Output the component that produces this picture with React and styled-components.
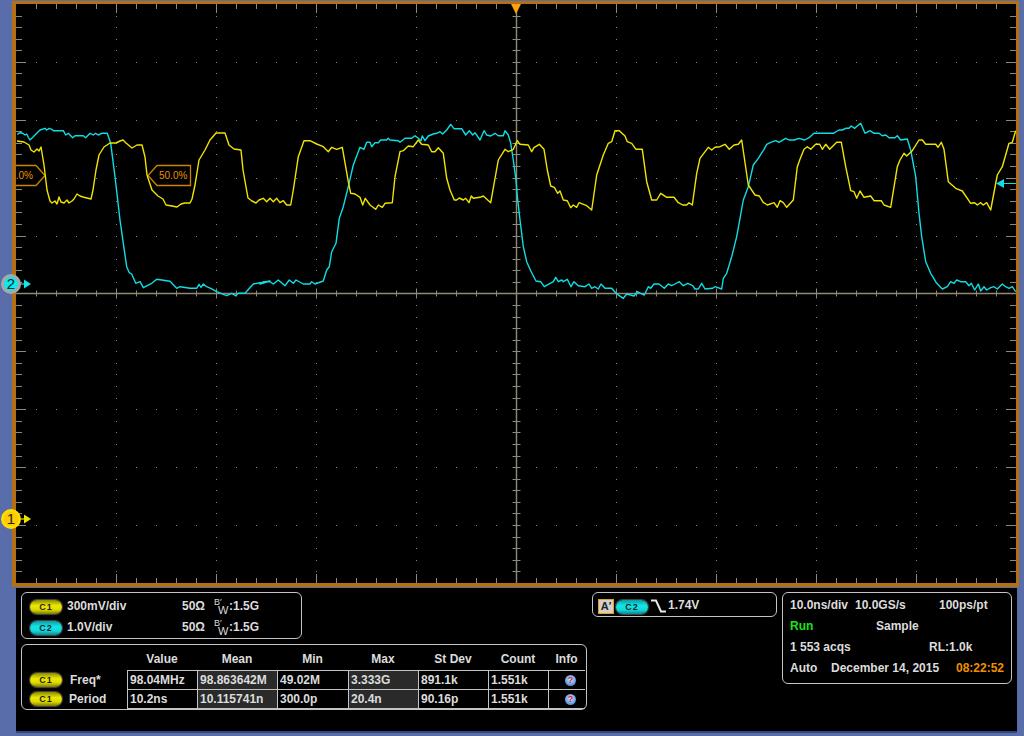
import React from "react";
import styled, { createGlobalStyle } from "styled-components";

const Global = createGlobalStyle`
  html, body {
    margin: 0;
    padding: 0;
    background: #5a6dab;
  }
  body {
    width: 1024px;
    height: 736px;
    overflow: hidden;
    font-family: "Liberation Sans", Arial, sans-serif;
  }
`;

// traces were read off the zoomed crops, so points are [crop x, crop y] at 3x
const crop = (ox, oy, pts) => pts.map(([x, y]) => [ox + x / 3, oy + y / 3]);
const toLine = pts => pts.map(([x, y]) => `${x.toFixed(1)},${y.toFixed(1)}`).join(" ");

const yellow = toLine([
  ...crop(0, 0, [[51, 423], [72, 426], [87, 435], [93, 450], [102, 456], [111, 447], [117, 453], [123, 441], [132, 495], [141, 570], [150, 603], [156, 609], [165, 603], [171, 612], [177, 591], [183, 606], [192, 609], [201, 600], [207, 609], [216, 603], [222, 597], [231, 582], [240, 588], [249, 591], [261, 594], [273, 597], [279, 570], [288, 510], [297, 465], [312, 441], [330, 429], [348, 429], [360, 423], [369, 420], [378, 429], [396, 444], [411, 435], [426, 435], [435, 471], [441, 525], [456, 570], [474, 588], [489, 597], [498, 615], [516, 618], [531, 621], [543, 612], [555, 609], [570, 609], [576, 597], [585, 555], [597, 480], [615, 450], [630, 420], [648, 399], [675, 399], [687, 435], [702, 447], [723, 450], [729, 510], [744, 594], [756, 603], [768, 609], [777, 600]]),
  ...crop(260, 110, [[10, 265], [20, 275], [30, 265], [40, 275], [50, 265], [60, 278], [70, 272], [80, 285], [92, 285], [100, 240], [115, 140], [132, 92], [150, 92], [170, 102], [190, 110], [205, 125], [215, 112], [230, 118], [247, 112], [265, 215], [272, 250], [285, 252], [300, 262], [308, 285], [316, 265], [330, 285], [347, 298], [355, 285], [367, 292], [375, 280], [397, 278], [405, 200], [420, 125], [430, 122], [445, 108], [460, 110], [475, 90], [485, 103], [505, 105], [515, 125], [525, 125], [535, 113], [550, 130], [560, 205], [570, 240], [583, 270], [590, 270], [598, 264], [610, 270], [617, 265], [627, 278], [634, 258], [640, 265], [660, 262], [670, 258], [692, 278], [715, 150], [735, 118], [745, 125], [760, 118]]),
  ...crop(510, 110, [[22, 92], [30, 103], [55, 105], [65, 125], [72, 113], [88, 103], [102, 118], [112, 180], [122, 228], [133, 232], [143, 250], [150, 243], [160, 270], [172, 272], [182, 293], [190, 285], [200, 292], [207, 278], [230, 287], [245, 300], [260, 195], [280, 135], [295, 100], [305, 95], [315, 62], [328, 62], [345, 78], [352, 95], [365, 100], [378, 118], [397, 118], [410, 215], [425, 270], [440, 270], [452, 250], [470, 262], [492, 262], [505, 278], [518, 285], [530, 285], [537, 278], [547, 285], [560, 190], [570, 145], [595, 112], [605, 120], [615, 112], [630, 110], [645, 103], [658, 118], [672, 105], [685, 103], [695, 90], [715, 225], [735, 255], [748, 258], [760, 278]]),
  ...crop(764, 110, [[0, 278], [10, 285], [30, 278], [40, 292], [48, 272], [58, 278], [68, 292], [88, 270], [100, 170], [107, 150], [120, 118], [130, 110], [140, 118], [155, 103], [167, 103], [175, 118], [185, 103], [197, 118], [218, 97], [232, 97], [245, 170], [260, 242], [270, 245], [278, 265], [288, 243], [300, 262], [320, 258], [330, 272], [352, 272], [360, 285], [380, 292], [400, 170], [408, 150], [420, 130], [428, 138], [445, 122], [465, 90], [475, 90], [485, 103], [515, 103], [522, 112], [532, 97], [540, 118], [553, 215], [575, 235], [595, 243], [620, 280], [632, 278], [640, 285], [650, 278], [658, 285], [668, 278], [680, 300], [700, 195], [715, 170], [735, 100], [745, 97], [755, 62]]),
]);

const cyan = toLine([
  ...crop(0, 0, [[52, 403], [60, 398], [68, 400], [75, 405], [80, 402], [85, 412], [90, 420], [100, 410], [110, 400], [120, 390], [135, 385], [140, 390], [148, 385], [155, 388], [160, 392], [190, 392], [197, 405], [205, 400], [218, 413], [225, 407], [250, 407], [257, 413], [270, 400], [280, 405], [287, 400], [295, 405], [305, 400], [322, 400]]),
  ...crop(90, 120, [[62, 70], [75, 170], [90, 300], [100, 370], [110, 440], [118, 458], [125, 462], [137, 490], [150, 485], [160, 503], [185, 490], [200, 478], [240, 484], [260, 505], [270, 500], [300, 505], [320, 505], [327, 493], [333, 502], [340, 492], [350, 500], [362, 505], [380, 515], [410, 527], [425, 520], [437, 527], [445, 520], [465, 520], [490, 492], [510, 488], [540, 483]]),
  ...crop(260, 110, [[0, 522], [10, 515], [30, 515], [40, 522], [55, 510], [75, 527], [88, 510], [100, 520], [108, 510], [130, 522], [150, 522], [155, 515], [165, 522], [190, 513], [200, 480], [208, 470], [215, 425], [228, 400], [238, 325], [250, 290], [265, 230], [280, 165], [300, 112], [312, 118], [320, 97], [330, 97], [335, 110], [345, 98], [355, 98], [362, 90], [380, 90], [385, 85], [390, 90], [415, 92], [420, 97], [435, 85], [455, 85], [465, 77], [475, 85], [483, 92], [487, 78], [495, 92], [505, 78], [520, 72], [530, 70], [540, 65], [548, 72], [560, 60], [572, 43], [582, 56], [605, 56], [617, 75], [628, 62], [638, 75], [645, 68], [660, 90], [672, 62], [680, 75], [692, 78], [705, 70], [715, 77], [730, 77], [735, 62], [745, 75], [752, 100], [760, 150], [768, 210]]),
  ...crop(510, 110, [[22, 260], [30, 330], [40, 410], [50, 455], [62, 482], [78, 513], [92, 515], [103, 530], [115, 523], [130, 515], [137, 502], [145, 515], [155, 510], [160, 515], [172, 508], [183, 530], [192, 515], [205, 527], [225, 530], [237, 522], [245, 535], [255, 530], [265, 537], [273, 522], [285, 535], [305, 535], [318, 550], [340, 565], [350, 552], [362, 555], [372, 558], [382, 545], [392, 550], [403, 555], [415, 530], [422, 535], [432, 522], [447, 522], [463, 535], [475, 522], [485, 527], [495, 522], [508, 515], [520, 527], [533, 520], [548, 527], [555, 537], [565, 537], [575, 520], [585, 537], [608, 535], [615, 530], [635, 537], [640, 505], [650, 490], [665, 440], [680, 380], [700, 270], [715, 230], [730, 165], [745, 145]]),
  ...crop(764, 110, [[0, 118], [8, 103], [20, 97], [35, 92], [45, 97], [65, 85], [75, 90], [90, 90], [105, 85], [122, 90], [135, 83], [150, 70], [208, 70], [225, 60], [235, 60], [245, 55], [255, 55], [262, 48], [272, 55], [280, 48], [290, 40], [303, 70], [318, 62], [330, 70], [345, 70], [355, 77], [365, 75], [375, 83], [393, 83], [400, 77], [410, 90], [430, 87], [440, 120], [455, 200], [465, 310], [473, 380], [485, 455], [500, 490], [518, 520], [535, 537], [550, 530], [560, 515], [570, 520], [578, 510], [590, 515], [605, 515], [615, 527], [622, 520], [632, 540], [643, 522], [650, 543], [660, 530], [668, 540], [680, 533], [690, 530], [700, 537], [715, 522], [725, 530], [735, 535], [745, 530], [755, 545]]),
]);

// graticule
const LEFT = 16;
const RIGHT = 1016;
const TOP = 4;
const BOTTOM = 583;
const CX = 516.5;
const CY = 293.5;
const STEP_Y = 11.58;
const xs = Array.from({ length: 49 }, (_, i) => 36.5 + i * 20);
const ys = Array.from({ length: 49 }, (_, i) => Math.round(15.5 + i * STEP_Y) + 0.5);
const colXs = [116.5, 216.5, 316.5, 416.5, 616.5, 716.5, 816.5, 916.5];
const rowYs = ys.filter((_, i) => (i + 1) % 5 === 0 && Math.abs(ys[i] - CY) > 3);

const isMajorX = x => Math.round(x - 16.5) % 100 === 0;
const isMajorY = i => (i + 1) % 5 === 0;

const ticks = [
  ...xs.map(x => {
    const h = isMajorX(x) ? 9 : 5;
    return `M${x} ${TOP}v${h}M${x} ${BOTTOM}v${-h}M${x} ${CY - (isMajorX(x) ? 5 : 3)}v${isMajorX(x) ? 10 : 6}`;
  }),
  ...ys.map((y, i) => {
    const w = isMajorY(i) ? 10 : 6;
    return `M${LEFT} ${y}h${w}M${RIGHT} ${y}h${-w}M${CX - 4} ${y}h8`;
  }),
].join("");

const dots = [
  ...rowYs.flatMap(y => xs.map(x => `M${x - 0.5} ${y}h1`)),
  ...colXs.flatMap(x => ys.map(y => `M${x - 0.5} ${y}h1`)),
].join("");

const Page = styled.div`
  width: 1024px;
  height: 736px;
  background: #5a6dab;
  padding-top: 1px;
  box-sizing: border-box;
`;

const Frame = styled.div`
  width: 1000px;
  height: 579px;
  margin-left: 12px;
  border: solid #b46f12;
  border-width: 3px 3px 4px 4px;
  background: #000;
  position: relative;
`;

const Screen = styled.svg`
  display: block;
  width: 1000px;
  height: 579px;
`;

const RefText = styled.text`
  font-family: "Liberation Sans", Arial, sans-serif;
  font-size: 10px;
  fill: #e89200;
`;

const TriggerPos = styled.div`
  position: absolute;
  left: 495px;
  top: 0;
  width: 0;
  height: 0;
  border-left: 5px solid transparent;
  border-right: 5px solid transparent;
  border-top: 10px solid #ffa010;
`;

const Handle = styled.div`
  position: absolute;
  left: -15px;
  top: ${p => p.$top}px;
  display: flex;
  align-items: center;
`;

const HandleDot = styled.div`
  width: 20px;
  height: 20px;
  border-radius: 50%;
  box-sizing: border-box;
  border: 3px solid ${p => p.$ring};
  background: radial-gradient(circle, ${p => p.$color} 60%, ${p => p.$edge});
  color: #222;
  font-size: 15px;
  line-height: 14px;
  text-align: center;
`;

const Panel = styled.div`
  width: 1001px;
  height: 145px;
  margin: 1px 0 0 16px;
  box-sizing: border-box;
  background: #000;
  border-bottom: 2px solid #34447e;
  padding: 4px 0 0 5px;
  display: flex;
  gap: 5px;
  align-items: flex-start;
  color: #dcdcdc;
  font-size: 12px;
  font-weight: bold;
  line-height: 14px;
  white-space: nowrap;
`;

const Column = styled.div`
  display: flex;
  flex-direction: column;
  gap: 5px;
`;

const Box = styled.div`
  box-sizing: border-box;
  width: ${p => p.$w}px;
  height: ${p => p.$h}px;
  border: 1px solid #c4c4c4;
  border-radius: 6px;
`;

const ChannelBox = styled(Box)`
  padding: 5px 0 0 8px;
  display: flex;
  flex-direction: column;
  gap: 7px;
`;

const ChannelRow = styled.div`
  display: grid;
  grid-template-columns: 32px 110px 27px auto;
  column-gap: 5px;
  align-items: center;
  height: 14px;
`;

const Pill = styled.span`
  display: block;
  width: 32px;
  height: 14px;
  border-radius: 7px;
  box-shadow: 0 0 1px 1px #4a4a4a;
  background: ${p =>
    p.$ch === 2
      ? "linear-gradient(#0b9ca1, #12e4e8 40%, #12d8dc 70%, #088a8e)"
      : "linear-gradient(#8c8a00, #ece800 40%, #dcd800 70%, #7c7a00)"};
  color: #1c1c1c;
  font-size: 9px;
  font-weight: bold;
  line-height: 14px;
  letter-spacing: 1px;
  text-align: center;
`;

const DropPill = styled(Pill)`
  margin-top: 2px;
`;

const BwCell = styled.span`
  display: flex;
`;

const Bw = styled.span`
  display: flex;
  flex-direction: column;
  width: 15px;
  height: 14px;
  font-weight: normal;
`;

const BwTop = styled.span`
  font-size: 9px;
  line-height: 7px;
`;

const BwLow = styled.span`
  font-size: 11px;
  line-height: 9px;
  padding-left: 4px;
`;

const Meas = styled(Box)`
  display: grid;
  grid-template-columns: 105px 70px 80px 71px 70px 70px 60px 37px;
  grid-template-rows: 25px 19px 20px;
`;

const Head = styled.div`
  text-align: center;
  align-self: center;
  padding-top: 3px;
`;

const Label = styled.div`
  display: flex;
  align-items: center;
  gap: ${p => p.$gap || 7}px;
  padding-left: 8px;
`;

const Cell = styled.div`
  border-top: 1px solid #c4c4c4;
  border-left: 1px solid #c4c4c4;
  background: ${p => (p.$dark ? "#2a2a2a" : "transparent")};
  padding-left: 2px;
  line-height: 18px;
  ${p => p.$last && "border-bottom: 1px solid #c4c4c4;"}
`;

const InfoCell = styled(Cell)`
  display: flex;
  align-items: center;
  justify-content: center;
  padding: 0 0 0 7px;
`;

const Info = styled.span`
  display: block;
  width: 11px;
  height: 11px;
  border-radius: 50%;
  background: radial-gradient(circle at 50% 40%, #d8e8ff, #4a8de0 75%);
  color: #d8201c;
  font-size: 9px;
  line-height: 11px;
  text-align: center;
`;

const TriggerBox = styled(Box)`
  display: flex;
  align-items: flex-start;
  padding: 5px 0 0 5px;
`;

const SlopeTag = styled.span`
  box-sizing: border-box;
  width: 16px;
  height: 15px;
  margin: 1px 2px 0 0;
  border: 1.5px solid #f09a10;
  background: #d0d0d0;
  color: #222;
  font-size: 11px;
  line-height: 12px;
  text-align: center;
`;

const Slope = styled.svg`
  display: block;
  margin: 1px 2px 0 3px;
`;

const TimeBox = styled(Box)`
  padding: 5px 0 0 7px;
  display: flex;
  flex-direction: column;
  gap: 7px;
`;

const TimeRow = styled.div`
  display: grid;
  grid-template-columns: ${p => p.$cols};
`;

const Tinted = styled.span`
  color: ${p => p.$color};
`;

const channels = [
  { ch: 1, scale: "300mV/div" },
  { ch: 2, scale: "1.0V/div" },
];

const measures = [
  { name: "Freq*", gap: 8, cells: ["98.04MHz", "98.863642M", "49.02M", "3.333G", "891.1k", "1.551k"] },
  { name: "Period", gap: 7, cells: ["10.2ns", "10.115741n", "300.0p", "20.4n", "90.16p", "1.551k"] },
];

const heads = ["", "Value", "Mean", "Min", "Max", "St Dev", "Count", "Info"];

function App() {
  return (
    <Page>
      <Global />
      <Frame>
        <Screen viewBox="16 4 1000 579">
          <path d={dots} stroke="#8a8670" strokeWidth="1" fill="none" />
          <path d={ticks} stroke="#8f8a76" strokeWidth="1" fill="none" />
          <path d={`M${LEFT} ${CY}H${RIGHT}M${CX} ${TOP}V${BOTTOM}`} stroke="#8f8a76" strokeWidth="1.4" fill="none" />
          <path d="M16 165.5H36L45 175.5L36 185.5H16" stroke="#cc8400" strokeWidth="1.3" fill="#000" />
          <path d="M190.5 165.5H157L148 175.5L157 185.5H190.5Z" stroke="#cc8400" strokeWidth="1.3" fill="#000" />
          <RefText x="33" y="179" textAnchor="end">.0%</RefText>
          <RefText x="159" y="179">50.0%</RefText>
          <polyline points={cyan} stroke="#0fdde4" strokeWidth="1.4" fill="none" strokeLinejoin="round" />
          <polyline points={yellow} stroke="#f0e400" strokeWidth="1.4" fill="none" strokeLinejoin="round" />
          <path d="M1004 183.5H1016" stroke="#0fdde4" strokeWidth="1" />
          <path d="M996 183.5L1004 179V188Z" fill="#0fdde4" />
        </Screen>
        <TriggerPos />
        <Handle $top={270}>
          <HandleDot $color="#10e8ec" $edge="#10c8cc" $ring="#a8a8a8">2</HandleDot>
          <svg width="10" height="10" viewBox="0 0 10 10">
            <path d="M0 5H5" stroke="#10e8ec" strokeWidth="1.2" />
            <path d="M3 0.5L10 5L3 9.5Z" fill="#10e8ec" />
          </svg>
        </Handle>
        <Handle $top={505}>
          <HandleDot $color="#ffcc00" $edge="#ffa000" $ring="#ffdc00">1</HandleDot>
          <svg width="10" height="10" viewBox="0 0 10 10">
            <path d="M0 5H5" stroke="#f0e400" strokeWidth="1.2" />
            <path d="M3 0.5L10 5L3 9.5Z" fill="#f0e400" />
          </svg>
        </Handle>
      </Frame>
      <Panel>
        <Column>
          <ChannelBox $w={281} $h={47}>
            {channels.map(c => (
              <ChannelRow key={c.ch}>
                <DropPill $ch={c.ch}>C{c.ch}</DropPill>
                <span>{c.scale}</span>
                <span>50Ω</span>
                <BwCell>
                  <Bw>
                    <BwTop>B′</BwTop>
                    <BwLow>W</BwLow>
                  </Bw>
                  :1.5G
                </BwCell>
              </ChannelRow>
            ))}
          </ChannelBox>
          <Meas $w={566} $h={66}>
            {heads.map((h, i) => (
              <Head key={i}>{h}</Head>
            ))}
            {measures.map((m, r) => (
              <React.Fragment key={m.name}>
                <Label $gap={m.gap}>
                  <Pill $ch={1}>C1</Pill>
                  {m.name}
                </Label>
                {m.cells.map((v, i) => (
                  <Cell key={i} $dark={i === 1 || i === 3} $last={r === 1}>
                    {v}
                  </Cell>
                ))}
                <InfoCell $last={r === 1}>
                  <Info>?</Info>
                </InfoCell>
              </React.Fragment>
            ))}
          </Meas>
        </Column>
        <TriggerBox $w={185} $h={25}>
          <SlopeTag>A′</SlopeTag>
          <DropPill $ch={2}>C2</DropPill>
          <Slope width="15" height="14" viewBox="0 0 15 14">
            <path d="M0 1.5H5L10 12.5H15" stroke="#e8e8e8" strokeWidth="2" fill="none" />
          </Slope>
          1.74V
        </TriggerBox>
        <TimeBox $w={230} $h={92}>
          <TimeRow $cols="65px 84px auto">
            <span>10.0ns/div</span>
            <span>10.0GS/s</span>
            <span>100ps/pt</span>
          </TimeRow>
          <TimeRow $cols="86px auto">
            <Tinted $color="#1fe01f">Run</Tinted>
            <span>Sample</span>
          </TimeRow>
          <TimeRow $cols="139px auto">
            <span>1 553 acqs</span>
            <span>RL:1.0k</span>
          </TimeRow>
          <TimeRow $cols="41px 125px auto">
            <span>Auto</span>
            <span>December 14, 2015</span>
            <Tinted $color="#ef8f00">08:22:52</Tinted>
          </TimeRow>
        </TimeBox>
      </Panel>
    </Page>
  );
}

export default App;
